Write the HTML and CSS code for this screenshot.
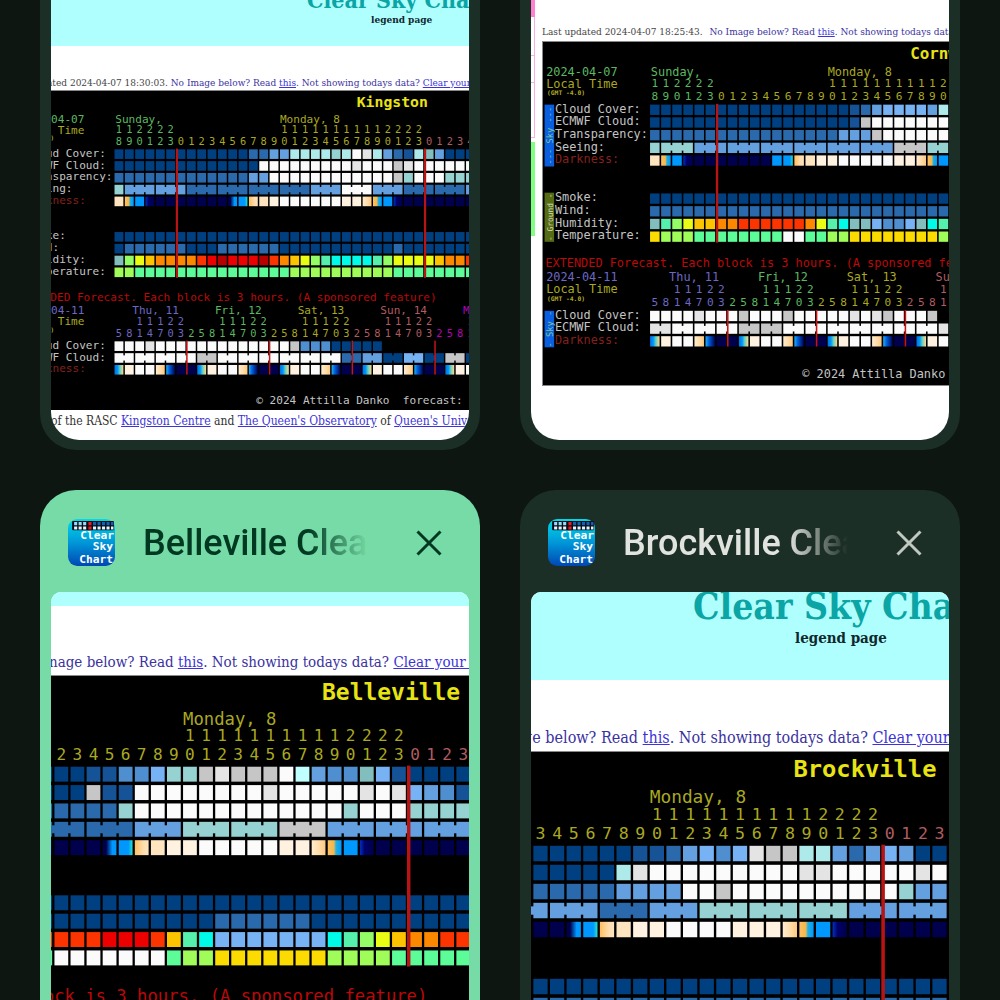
FILE: index.html
```html
<!DOCTYPE html>
<html lang="en">
<head>
<meta charset="utf-8">
<meta name="viewport" content="width=device-width, initial-scale=1">
<title>Open tabs</title>
<link rel="stylesheet" href="styles.css">
</head>
<body>
<svg class="defs" aria-hidden="true">
  <defs>
    <linearGradient id="icon-sky" x1="0" y1="0" x2="0" y2="1"><stop offset="0" stop-color="#00dbe8"/><stop offset=".5" stop-color="#0097d8"/><stop offset="1" stop-color="#0047b4"/></linearGradient>
    <symbol id="favicon" viewBox="0 0 46 46">
      <rect width="46" height="46" rx="9" fill="url(#icon-sky)"/>
      <rect x="4" y="2" width="41" height="9" rx="1" fill="#05101c"/>
      <path d="M6 4.500h13" stroke="#9fd8f4" stroke-width="3" stroke-dasharray="3 1.400"/>
      <path d="M24.500 4.500h20" stroke="#1a5fae" stroke-width="3" stroke-dasharray="3 1.400"/>
      <path d="M6 8.800h13M24.500 8.800h20" stroke="#e8f4fa" stroke-width="3" stroke-dasharray="3 1.400"/>
      <path d="M20 4.500h3M20 8.800h3" stroke="#f01818" stroke-width="3"/>
      <text x="45" y="20" class="icon-text">Clear</text>
      <text x="44" y="30" class="icon-text">Sky</text>
      <text x="44" y="43" class="icon-text">Chart</text>
    </symbol>
    <symbol id="close" viewBox="0 0 26 26"><path d="M1.500 1.500l23 23M24.500 1.500l-23 23" fill="none" stroke="currentColor" stroke-width="3"/></symbol>
  </defs>
</svg>
<main class="tabs">
  <article class="tab tab-scrolled">
    <div class="preview preview-kingston">
      <div class="banner">
        <h2>Clear Sky Chart</h2>
        <p>legend page</p>
      </div>
      <p class="status"><span class="updated">ated 2024-04-07 18:30:03.</span> No Image below? Read <a href="#this">this</a>. Not showing todays data? <a href="#clear">Clear your cache</a></p>
      <svg class="chart" data-chart="kingston" role="img" aria-label="Kingston sky chart"></svg>
      <p class="credit">of the RASC <a href="#centre">Kingston Centre</a> and <a href="#observatory">The Queen's Observatory</a> of <a href="#university">Queen's University</a></p>
    </div>
  </article>
  <article class="tab tab-scrolled">
    <div class="preview preview-cornwall">
      <div class="strip"><i class="pink"></i><i class="box"></i><i class="box"></i><i class="box box-tall"></i><i class="green"></i></div>
      <div class="sheet">
        <p class="status"><span class="updated">Last updated 2024-04-07 18:25:43.</span> No Image below? Read <a href="#this">this</a>. Not showing todays data?</p>
        <svg class="chart" data-chart="cornwall" role="img" aria-label="Cornwall sky chart"></svg>
      </div>
    </div>
  </article>
  <article class="tab tab-active">
    <header>
      <svg class="favicon"><use href="#favicon"/></svg>
      <h1>Belleville Clear Sky Chart</h1>
      <button type="button" aria-label="Close Belleville tab"><svg><use href="#close"/></svg></button>
    </header>
    <div class="preview preview-belleville">
      <div class="banner"></div>
      <p class="status">nage below? Read <a href="#this">this</a>. Not showing todays data? <a href="#clear">Clear your cache</a></p>
      <svg class="chart" data-chart="belleville" role="img" aria-label="Belleville sky chart"></svg>
    </div>
  </article>
  <article class="tab">
    <header>
      <svg class="favicon"><use href="#favicon"/></svg>
      <h1>Brockville Clear Sky Chart</h1>
      <button type="button" aria-label="Close Brockville tab"><svg><use href="#close"/></svg></button>
    </header>
    <div class="preview preview-brockville">
      <div class="banner">
        <h2>Clear Sky Chart</h2>
        <p>legend page</p>
      </div>
      <p class="status">ge below? Read <a href="#this">this</a>. Not showing todays data? <a href="#clear">Clear your cache</a></p>
      <svg class="chart" data-chart="brockville" role="img" aria-label="Brockville sky chart"></svg>
    </div>
  </article>
</main>
<script src="charts.js"></script>
</body>
</html>
```

FILE: styles.css
```css
* { box-sizing: border-box; }
body {
  margin: 0;
  background: #0d1611;
  font-family: Roboto, "Noto Sans", sans-serif;
}
h1, h2, p { margin: 0; }
.defs { position: absolute; width: 0; height: 0; }

.tabs {
  display: grid;
  grid-template-columns: 1fr 1fr;
  gap: 40px;
  height: 100vh;
  padding: 0 40px;
  overflow: hidden;
  align-content: start;
}
.tab {
  min-width: 0;
  padding: 0 11px 10px;
  border-radius: 36px;
  background: #1c2f26;
  color: #e1e3df;
}
.tab-scrolled { border-radius: 0 0 36px 36px; }
.tab-active { background: #76dba6; color: #003822; }

.tab header {
  display: flex;
  align-items: center;
  height: 102px;
  padding: 3px 27px 0 17px;
}
.favicon { flex: none; width: 47px; height: 47px; }
.icon-text {
  font: bold 11px "DejaVu Sans Mono", monospace;
  fill: #fff;
  text-anchor: end;
}
.tab h1 {
  flex: 1;
  min-width: 0;
  margin: 0 48px 0 28px;
  overflow: hidden;
  white-space: nowrap;
  font-size: 36px;
  font-weight: 500;
  line-height: 48px;
  mask-image: linear-gradient(to right, #000 calc(100% - 60px), transparent);
}
.tab button {
  flex: none;
  display: flex;
  padding: 0;
  border: 0;
  background: none;
  color: #c0c9c1;
}
.tab-active button { color: #003822; }
.tab button svg { width: 26px; height: 26px; }

.preview {
  overflow: hidden;
  border-radius: 10px 10px 28px 28px;
  background: #fff;
  color: #333;
  font-family: "DejaVu Serif Condensed", "DejaVu Serif", serif;
  white-space: nowrap;
}
.tab-scrolled .preview { min-height: 440px; border-radius: 0 0 28px 28px; }
.banner { overflow: hidden; background: #afffff; }
.banner h2 { color: #0ba5a5; font-weight: bold; }
.banner p { color: #10282c; font-weight: bold; }
.status { overflow: hidden; color: #3a32a0; }
.updated { color: #444; }
.preview a { color: #3c34d8; }
.chart { display: block; width: 100%; border-top: 1px solid #888; background: #000; }

.preview-kingston .banner { height: 46px; padding-left: 256px; }
.preview-kingston h2 { margin-top: -14px; font-size: 23px; line-height: 28px; }
.preview-kingston .banner p { padding-left: 64px; font-size: 10px; line-height: 12px; }
.preview-kingston .status { padding-top: 30px; font-size: 10px; line-height: 14px; text-indent: -4px; }
.credit { font-size: 12px; line-height: 22px; }

.preview-cornwall { display: flex; }
.strip { flex: none; width: 11px; display: flex; flex-direction: column; align-items: flex-start; }
.pink { width: 4px; height: 17px; background: #ff80d0; }
.box { width: 4px; height: 39px; border: solid #f8b0e0; border-width: 0 1px 1px 0; }
.box + .box { height: 27px; }
.box + .box-tall { height: 55px; }
.green { width: 4px; height: 94px; margin-top: 4px; background: #80ff80; }
.sheet { flex: 1; min-width: 0; }
.sheet .chart { border-left: 1px solid #888; border-bottom: 1px solid #888; }
.preview-cornwall .status { padding: 24px 0 2px; font-size: 10px; line-height: 15px; }
.preview-cornwall .updated { margin-right: 4px; }

.preview-belleville .banner { height: 14px; }
.preview-belleville .status { padding: 46px 0 3px; font-size: 15px; line-height: 20px; text-indent: -2px; }

.preview-brockville .banner { height: 88px; padding-left: 162px; }
.preview-brockville h2 { margin-top: -7px; font-size: 37px; line-height: 42px; }
.preview-brockville .banner p { padding-left: 102px; font-size: 15px; line-height: 22px; }
.preview-brockville .status { padding: 48px 0 3px; font-size: 16px; line-height: 20px; text-indent: -8px; }

.chart text { font: 15px "DejaVu Sans Mono", monospace; fill: #c4c4c4; white-space: pre; }
.chart .digit { font-size: 14px; text-anchor: middle; }
.chart .place { font-size: 20px; font-weight: bold; fill: #e8e414; }
.chart .zone { font-size: 8px; font-weight: bold; fill: #b4ac20; }
.chart .side { font-size: 11px; text-anchor: middle; fill: #7cc49c; }
.chart .side-ground { font-size: 10px; fill: #d8dcb8; }
.chart .sun { fill: #5cb860; }
.chart .mon { fill: #aaa820; }
.chart .tue { fill: #b05c60; }
.chart .thu { fill: #6c68c4; }
.chart .next { fill: #b800b8; }
.chart .dark { fill: #84201c; }
.chart .notice { fill: #bc0808; }
```

FILE: charts.js
```js
const COLORS = {
  a: '#004080', b: '#165396', c: '#2a6aac', d: '#4f8fd0', e: '#64a0e0', f: '#76b2f4',
  g: '#96d2d2', h: '#aeeaea', i: '#c0ffff', t: '#82bebe', j: '#c6c6c6', k: '#e4e4e4', w: '#fbfbfb',
  o: '#fc8800', y: '#fcc400', Y: '#e8fc14', G: '#94fc64', M: '#54f0ac', C: '#00fce8',
  R: '#fc3400', D: '#ec0000', X: '#b80000', l: '#a0fc58', m: '#5cfc98', n: '#fcdc00',
  N: '#00004c', B: '#0098ff', s: '#ffe4c0', v: '#fff2e0'
};
const BLENDS = {
  1: ['#00004c', '#00004c 25%', '#0098ff 70%'],
  2: ['#0098ff', '#0098ff 70%', '#20d8d0 95%'],
  3: ['#ffc060', '#f0b850 45%', '#20b0e0 60%', '#0098ff'],
  4: ['#0030c0', '#000068 35%', '#00004c'],
  5: ['#0070e0', '#0098ff 35%', '#60d0c0 60%', '#ffd890'],
  6: ['#20b0f0', '#0060e0 35%', '#00004c'],
  A: ['#ffc060', '#ffdcac 60%', '#ffe4c0'],
  u: ['#ffeccf', '#ffdca8 55%', '#ffc880']
};
const r = (code, n) => code.repeat(n);
const ROW_Y = [85, 101, 117, 133, 149, 197, 213, 229, 245];
const EXT_Y = [345, 361, 377];
const DUSK = '5vwwu6NN'.repeat(5).slice(0, 35);
const CHARTS = {
  kingston: {
    place: 'Kingston', placeX: 463, view: [49, 566],
    rows: [
      r('a', 13) + 'cceehhhhghwkhecbhteaaa',
      r('a', 14) + r('w', 9) + 'kwwwjk' + r('w', 6),
      r('c', 13) + 'ee' + r('w', 12) + 'jgwwwggg',
      'g' + r('e', 6) + r('c', 12) + 'eeewwweee' + r('c', 6) + 'e',
      's3B4' + r('N', 7) + '12Asvwwwwwwvvu3B4' + r('N', 7),
      r('a', 35),
      'a' + r('c', 6) + 'aaa' + r('c', 6) + r('a', 11) + 'c' + r('a', 7),
      'tGYyooooRDXDDDXRoyYGMCCCCMGYYYYyooR',
      'll' + r('m', 15) + r('l', 10) + r('m', 8)
    ],
    ext: ['wwwk' + r('w', 13) + 'jdddaaaaa', r('w', 8) + 'jj' + r('w', 12) + 'cceeaaffaajja', DUSK]
  },
  cornwall: {
    place: 'Cornwall', placeX: 463, view: [0, 512],
    rows: [
      r('a', 18) + 'bceffffeh',
      r('a', 18) + 'bj' + r('w', 7),
      r('c', 17) + 'eeej' + r('w', 6),
      'gggg' + r('e', 18) + 'jjjgg',
      's3B4' + r('N', 7) + 'B2Asvvwwwwwvvu3B',
      r('a', 27),
      r('c', 27),
      'tMGYyyooRRRRRRoYMCttfddftCM',
      'nlll' + r('m', 8) + 'wwmmll' + r('n', 8) + 'l'
    ],
    ext: ['wwwwkwwwjwwwjwwwwwkwkjwwwj', 'kkwwwwwwjjjj' + r('w', 14) + 'k', DUSK.slice(0, 27)]
  },
  belleville: {
    place: 'Belleville', placeX: 480, view: [244, 364],
    rows: [
      r('a', 10) + 'bbddfggjkjjjwieddtfbaaaa',
      r('a', 10) + 'jbb' + r('w', 8) + 'kwwwwwkwkfedb',
      r('c', 12) + 'g' + r('w', 13) + 'gwwwgggg',
      r('c', 13) + 'eee' + r('g', 6) + 'jjj' + r('e', 9),
      r('N', 11) + '12Asvvwwwwwvvu3B4' + r('N', 6),
      r('a', 34),
      r('a', 18) + r('c', 6) + r('a', 10),
      r('R', 11) + 'DDDRyMC' + r('f', 7) + 'CMGYyooRR',
      r('m', 8) + r('w', 7) + 'mll' + r('n', 7) + 'llllmmmmm'
    ],
    ext: []
  },
  brockville: {
    place: 'Brockville', placeX: 480, view: [259, 352],
    rows: [
      r('a', 15) + 'bbcefdfkjjhhecefeaa',
      r('a', 14) + 'hk' + r('w', 9) + 'kkwwwwwkw',
      r('c', 14) + 'eeeewwj' + r('w', 10) + 'gee',
      r('e', 13) + 'ccceee' + r('g', 9) + r('e', 6),
      r('N', 11) + '12Asvvwwwwvvvu3B4' + r('N', 6),
      r('a', 34),
      r('c', 34)
    ],
    ext: []
  }
};

const LEFT = 136, PITCH = 14;
const rect = (x, y, w, h, fill) => `<rect x="${x}" y="${y}" width="${w}" height="${h}" fill="${fill}"/>`;
const text = (x, y, cls, str) => `<text x="${x}" y="${y + 5}" class="${cls}">${str}</text>`;

function blends() {
  return '<defs>' + Object.entries(BLENDS).map(([key, stops]) =>
    `<linearGradient id="blend-${key}">` + stops.map((s, i) => {
      const [color, at] = s.split(' ');
      return `<stop offset="${at || (i ? '100%' : '0%')}" stop-color="${color}"/>`;
    }).join('') + '</linearGradient>').join('') + '</defs>';
}

/* One row of blocks; joined(i) says whether block i is bridged to the one before it. */
function blocks(codes, y, joined) {
  return [...codes].map((code, i) => {
    const x = LEFT - 1 + i * PITCH;
    const fill = COLORS[code] || `url(#blend-${code})`;
    return rect(x, y - 6, 12, 13, fill) + (joined && joined(i) ? rect(x - 3, y - 3, 4, 7, fill) : '');
  }).join('');
}

function hours(count, startHour, step, y, classes) {
  let out = '', hour = startHour, day = 0;
  for (let i = 0; i < count; i++) {
    const x = LEFT + 5 + i * PITCH;
    if (hour > 9) out += text(x, y, 'digit ' + classes[day], Math.floor(hour / 10));
    out += text(x, y + 16, 'digit ' + classes[day], hour % 10);
    hour += step;
    if (hour > 23) { hour -= 24; day++; }
  }
  return out;
}

function side(y, h, fill, cls, label) {
  const mid = y + h / 2;
  return rect(2, y, 12, h, fill) + `<text x="12" y="${mid}" class="${cls}" transform="rotate(-90 12 ${mid})">${label}</text>`;
}

function draw(svg, chart) {
  const [x0, width] = chart.view;
  svg.setAttribute('viewBox', `${x0} 0 ${width} 432`);
  let out = blends();
  out += text(chart.placeX, 16, 'place', chart.place);
  if (x0 < 100) {
    out += text(4, 38, 'sun', '2024-04-07') + text(4, 53, 'mon', 'Local Time') + text(5, 62, 'zone', '(GMT -4.0)');
    out += text(LEFT, 38, 'sun', 'Sunday,');
    ['Cloud Cover:', 'ECMWF Cloud:', 'Transparency:', 'Seeing:', 'Darkness:', 'Smoke:', 'Wind:', 'Humidity:', 'Temperature:']
      .forEach((label, i) => { out += text(15, ROW_Y[i] - 1, label === 'Darkness:' ? 'dark' : '', label); });
    out += side(79, 78, '#0a5fe0', 'side', '--- Sky ---') + side(190, 62, '#566c14', 'side side-ground', '- Ground -');
  }
  out += text(359, 38, 'mon', 'Monday, 8');
  out += hours(35, 18, 1, 52, ['sun', 'mon', 'tue']);
  chart.rows.forEach((codes, i) => {
    out += blocks(codes, ROW_Y[i], i === 3 ? n => n > 1 && (n - 1) % 3 !== 0 : null);
  });
  [219, 555].forEach(x => { out += rect(x - 1, 78, 3, 175, '#b81414'); });
  out += text(3, 279, 'notice', 'EXTENDED Forecast. Each block is 3 hours. (A sponsored feature)');
  if (chart.ext.length) {
    out += text(4, 297, 'thu', '2024-04-11') + text(4, 312, 'mon', 'Local Time') + text(5, 322, 'zone', '(GMT -4.0)');
    [['Thu, 11', 'thu'], ['Fri, 12', 'sun'], ['Sat, 13', 'mon'], ['Sun, 14', 'tue'], ['Mon, 15', 'next']]
      .forEach(([day, cls], i) => { out += text(159 + i * 112, 297, cls, day); });
    out += hours(35, 5, 3, 312, ['thu', 'sun', 'mon', 'tue', 'next']);
    ['Cloud Cover:', 'ECMWF Cloud:', 'Darkness:']
      .forEach((label, i) => { out += text(15, EXT_Y[i] - 1, i === 2 ? 'dark' : '', label); });
    out += side(339, 46, '#0a5fe0', 'side', '- Sky -');
    chart.ext.forEach((codes, i) => { out += blocks(codes, EXT_Y[i], i === 1 ? n => n % 2 === 1 : null); });
    [233, 345, 457, 569].forEach(x => { out += rect(x - 1, 338, 2, 46, '#c81414'); });
    out += text(327, 419, '', '© 2024 Attilla Danko  forecast:');
  }
  svg.innerHTML = out;
}

document.querySelectorAll('[data-chart]').forEach(svg => draw(svg, CHARTS[svg.dataset.chart]));
```
